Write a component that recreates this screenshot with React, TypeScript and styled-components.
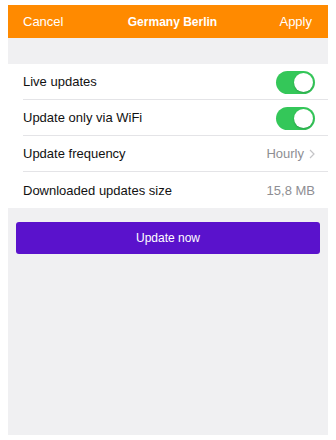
import React from 'react';
import styled, { createGlobalStyle } from 'styled-components';

const GlobalStyle = createGlobalStyle`
    html, body {
        margin: 0;
        padding: 0;
        background: #fff;
    }
    body {
        font-family: "Liberation Sans", Arial, sans-serif;
        -webkit-font-smoothing: antialiased;
    }
`

const Screen = styled.div`
    margin: 5px 8px 0 8px;
    width: 320px;
    height: 430px;
    background: #f0f0f2;
    display: flex;
    flex-direction: column;
`

const NavBar = styled.div`
    height: 33px;
    background: #ff8a00;
    display: flex;
    align-items: center;
    justify-content: space-between;
    padding: 0 16px 0 15px;
    color: #fff;
    font-size: 13px;
`

const NavTitle = styled.div`
    font-weight: bold;
    font-size: 12px;
    margin-left: 2px;
`

const Spacer = styled.div`
    height: 26px;
`

const List = styled.div`
    background: #fff;
    padding-left: 15px;
`

const Row = styled.div<{ last?: boolean }>`
    height: 36px;
    display: flex;
    align-items: center;
    justify-content: space-between;
    padding-right: 13px;
    border-bottom: ${props => props.last ? 'none' : '1px solid #e4e4e7'};
    box-sizing: border-box;
    font-size: 13px;
    color: #111;
`

const Value = styled.div`
    color: #8e8e93;
    font-size: 13px;
    display: flex;
    align-items: center;
    gap: 5px;
`

const Toggle = styled.div<{ on: boolean }>`
    width: 39px;
    height: 23px;
    margin-top: 2px;
    border-radius: 12px;
    background: ${props => props.on ? '#34c759' : '#e5e5ea'};
    position: relative;
    &::after {
        content: '';
        position: absolute;
        top: 2px;
        left: ${props => props.on ? '18px' : '2px'};
        width: 19px;
        height: 19px;
        border-radius: 50%;
        background: #fff;
        box-shadow: 0 1px 2px rgba(0,0,0,0.2);
    }
`

const Button = styled.button`
    margin: 14px 8px 0 8px;
    height: 32px;
    border: none;
    border-radius: 3px;
    background: #5a12cc;
    color: #fff;
    font-family: "Liberation Sans", Arial, sans-serif;
    font-size: 12px;
    cursor: pointer;
`

function Chevron() {
    return (
        <svg width="6" height="10" viewBox="0 0 6 10">
            <path d="M1 1 L5 5 L1 9" stroke="#c4c4c7" strokeWidth="1.2" fill="none" />
        </svg>
    );
}

function App() {
    return (
        <>
            <GlobalStyle />
            <Screen>
                <NavBar>
                    <div>Cancel</div>
                    <NavTitle>Germany Berlin</NavTitle>
                    <div>Apply</div>
                </NavBar>
                <Spacer />
                <List>
                    <Row>
                        <div>Live updates</div>
                        <Toggle on={true} />
                    </Row>
                    <Row>
                        <div>Update only via WiFi</div>
                        <Toggle on={true} />
                    </Row>
                    <Row>
                        <div>Update frequency</div>
                        <Value>Hourly <Chevron /></Value>
                    </Row>
                    <Row last>
                        <div>Downloaded updates size</div>
                        <Value>15,8 MB</Value>
                    </Row>
                </List>
                <Button>Update now</Button>
            </Screen>
        </>
    );
}

export default App;
